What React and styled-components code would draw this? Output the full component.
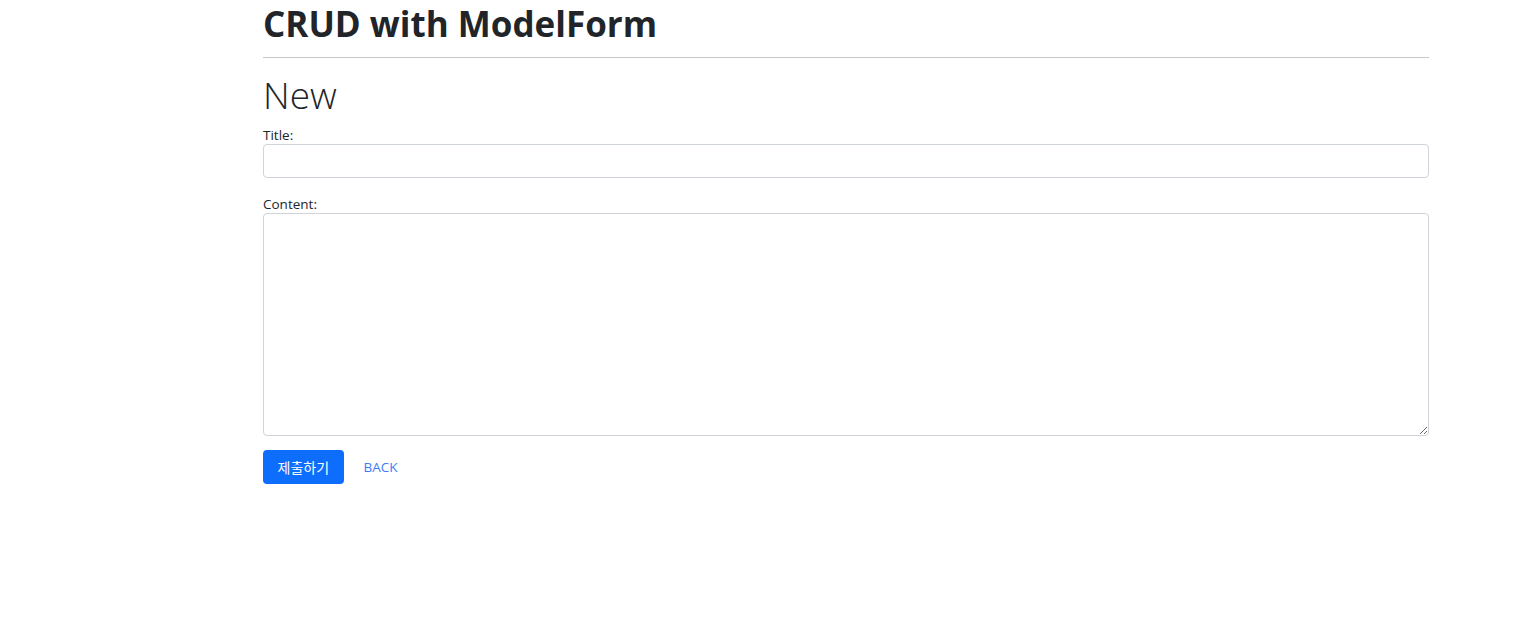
import React from "react";
import styled, { createGlobalStyle } from "styled-components";

const GlobalStyle = createGlobalStyle`
  body {
    margin: 0;
    background: #fff;
    color: #212529;
    font-family: "Open Sans", "Noto Sans", "Noto Sans CJK KR", sans-serif;
    font-size: 14px;
  }
  * { box-sizing: border-box; }
`;

const Container = styled.div`
  width: 1166px;
  margin-left: 263px;
`;

const Heading = styled.h1`
  margin: 0;
  font-size: 35px;
  font-weight: 700;
  line-height: 48px;
`;

const Rule = styled.hr`
  margin: 9px 0 15px;
  border: 0;
  border-top: 1px solid #c8c8c8;
`;

const SubHeading = styled.h2`
  margin: 0 0 10px;
  font-size: 37px;
  font-weight: 300;
  line-height: 44px;
`;

const Field = styled.div`
  margin-bottom: 18px;
`;

const Label = styled.label`
  display: block;
  font-size: 13.5px;
  line-height: 17px;
`;

const Input = styled.input`
  display: block;
  width: 100%;
  height: 34px;
  padding: 6px 12px;
  border: 1px solid #ced4da;
  border-radius: 4px;
  font: inherit;
`;

const TextArea = styled.textarea`
  display: block;
  width: 100%;
  height: 223px;
  padding: 6px 12px;
  border: 1px solid #ced4da;
  border-radius: 4px;
  font: inherit;
`;

const Actions = styled.div`
  display: flex;
  align-items: center;
  gap: 20px;
  margin-top: -4px;
`;

const Submit = styled.button`
  height: 34px;
  padding: 0 14.5px;
  border: 0;
  border-radius: 4px;
  background: #0d6efd;
  color: #fff;
  font-family: "Noto Sans CJK KR", sans-serif;
  font-size: 14px;
`;

const BackLink = styled.a`
  color: #3d7cf5;
  text-decoration: none;
  font-size: 13.5px;
`;

export default function App() {
  return (
    <>
      <GlobalStyle />
      <Container>
        <Heading>CRUD with ModelForm</Heading>
        <Rule />
        <SubHeading>New</SubHeading>
        <form>
          <Field>
            <Label htmlFor="title">Title:</Label>
            <Input id="title" type="text" />
          </Field>
          <Field>
            <Label htmlFor="content">Content:</Label>
            <TextArea id="content" />
          </Field>
          <Actions>
            <Submit type="button">제출하기</Submit>
            <BackLink href="#">BACK</BackLink>
          </Actions>
        </form>
      </Container>
    </>
  );
}
